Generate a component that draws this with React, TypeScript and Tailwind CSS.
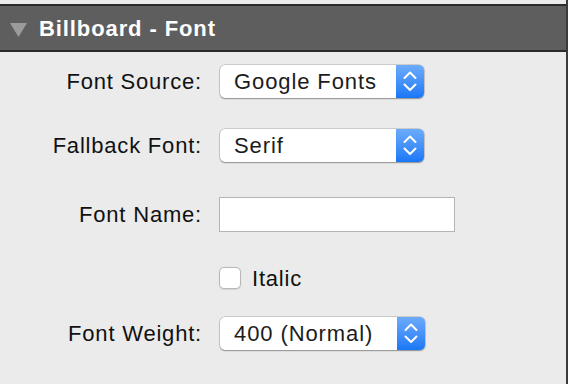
import React from "react";

const Chevrons = () => (
  <svg width="28" height="33" viewBox="0 0 28 33" className="block">
    <path d="M8.5 13 L14 7.5 L19.5 13" fill="none" stroke="#fff" strokeWidth="2" strokeLinecap="round" strokeLinejoin="round" />
    <path d="M8.5 19.5 L14 25 L19.5 19.5" fill="none" stroke="#fff" strokeWidth="2" strokeLinecap="round" strokeLinejoin="round" />
  </svg>
);

const Dropdown = ({ value, width }: { value: string; width: string }) => (
  <div
    className={`flex h-[33px] ${width} items-stretch rounded-[5px] bg-white shadow-[0_0_0_0.5px_rgba(0,0,0,0.25),0_1px_1.5px_rgba(0,0,0,0.3)]`}
  >
    <div className="flex flex-1 items-center pl-[14px] text-[22px] tracking-[0.9px] text-[#1c1c1c]">
      {value}
    </div>
    <div className="flex w-[28px] items-center justify-center rounded-r-[5px] bg-gradient-to-b from-[#6cabfb] to-[#1877f6]">
      <Chevrons />
    </div>
  </div>
);

const Label = ({ children }: { children: React.ReactNode }) => (
  <div className="w-[202px] shrink-0 text-right text-[22px] tracking-[0.8px] text-[#111]">
    {children}
  </div>
);

export default function App() {
  return (
    <div
      className="flex h-[384px] w-[568px] bg-[#ebebeb]"
      style={{ fontFamily: '"Liberation Sans", Arial, sans-serif' }}
    >
      <div className="flex flex-1 flex-col pt-[4px]">
        <div className="flex h-[48px] items-center border-y-2 border-[#2a2a2a] bg-[#5e5e5e]">
          <svg width="17" height="14" viewBox="0 0 17 14" className="ml-[10px] mt-[3px]">
            <polygon points="0,0 17,0 8.5,14" fill="#9b9b9b" />
          </svg>
          <span className="ml-[12px] text-[22px] font-bold tracking-[0.9px] text-white">
            Billboard - Font
          </span>
        </div>

        <div className="mt-[13px] flex items-center gap-[18px]">
          <Label>Font Source:</Label>
          <Dropdown value="Google Fonts" width="w-[204px]" />
        </div>

        <div className="mt-[31px] flex items-center gap-[18px]">
          <Label>Fallback Font:</Label>
          <Dropdown value="Serif" width="w-[204px]" />
        </div>

        <div className="mt-[35px] flex items-center gap-[17px]">
          <Label>Font Name:</Label>
          <input
            type="text"
            className="h-[35px] w-[236px] border border-[#b4b4b4] bg-white outline-none"
          />
        </div>

        <div className="mt-[35px] flex h-[22px] items-center pl-[219px]">
          <div className="h-[22px] w-[22px] rounded-[5px] border border-[#b8b8b8] bg-white shadow-[0_0.5px_1px_rgba(0,0,0,0.1)]" />
          <span className="ml-[11px] text-[22px] tracking-[0.8px] text-[#111]">Italic</span>
        </div>

        <div className="mt-[28px] flex items-center gap-[18px]">
          <Label>Font Weight:</Label>
          <Dropdown value="400 (Normal)" width="w-[205px]" />
        </div>
      </div>
      <div className="w-[2px] bg-[#3b3b3b]" />
    </div>
  );
}
